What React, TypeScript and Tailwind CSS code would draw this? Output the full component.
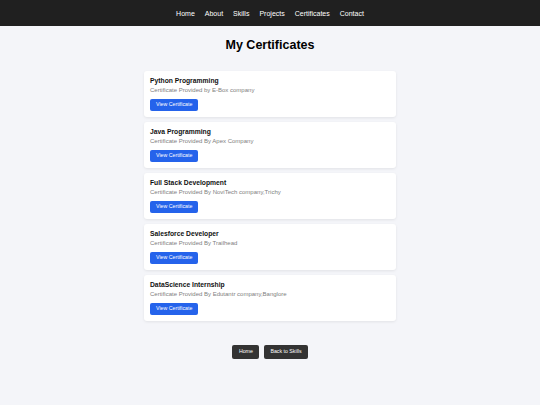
const certificates = [
  { title: 'Python Programming', by: 'Certificate Provided by E-Box company' },
  { title: 'Java Programming', by: 'Certificate Provided By Apex Company' },
  { title: 'Full Stack Development', by: 'Certificate Provided By NoviTech company,Trichy' },
  { title: 'Salesforce Developer', by: 'Certificate Provided By Trailhead' },
  { title: 'DataScience Internship', by: 'Certificate Provided By Edutantr company,Banglore' },
];

const links = ['Home', 'About', 'Skills', 'Projects', 'Certificates', 'Contact'];

const App = () => {
  return (
    <div className="min-h-screen bg-[#f4f5f9] font-['Liberation_Sans',Arial,sans-serif]">
      <nav className="h-[26px] bg-[#202020] flex items-center justify-center gap-[10px]">
        {links.map((l) => (
          <a key={l} className="text-white text-[7px] leading-none">
            {l}
          </a>
        ))}
      </nav>

      <h1 className="mt-[11px] text-center text-[12.5px] leading-[16px] font-bold text-black">
        My Certificates
      </h1>

      <div className="mt-[18px] w-[252px] mx-auto flex flex-col gap-[5.5px]">
        {certificates.map((c) => (
          <div
            key={c.title}
            className="bg-white rounded-[3px] shadow-[0_1px_3px_rgba(0,0,0,0.08)] px-[6px] pt-[6px] h-[45.5px] flex flex-col items-start"
          >
            <h3 className="text-[6.75px] leading-[8px] font-bold text-[#111]">{c.title}</h3>
            <p className="mt-[1.5px] text-[6px] leading-[7px] text-[#808080]">{c.by}</p>
            <button className="mt-[5px] h-[12px] px-[6px] flex items-center bg-[#2563eb] text-white text-[5.25px] leading-none rounded-[2px]">
              View Certificate
            </button>
          </div>
        ))}
      </div>

      <div className="mt-[24px] flex justify-center gap-[5px]">
        <button className="h-[14px] px-[6.5px] bg-[#333333] text-white text-[5.25px] leading-none rounded-[2px]">
          Home
        </button>
        <button className="h-[14px] px-[6px] bg-[#333333] text-white text-[5.25px] leading-none rounded-[2px]">
          Back to Skills
        </button>
      </div>
    </div>
  );
};

export default App;
